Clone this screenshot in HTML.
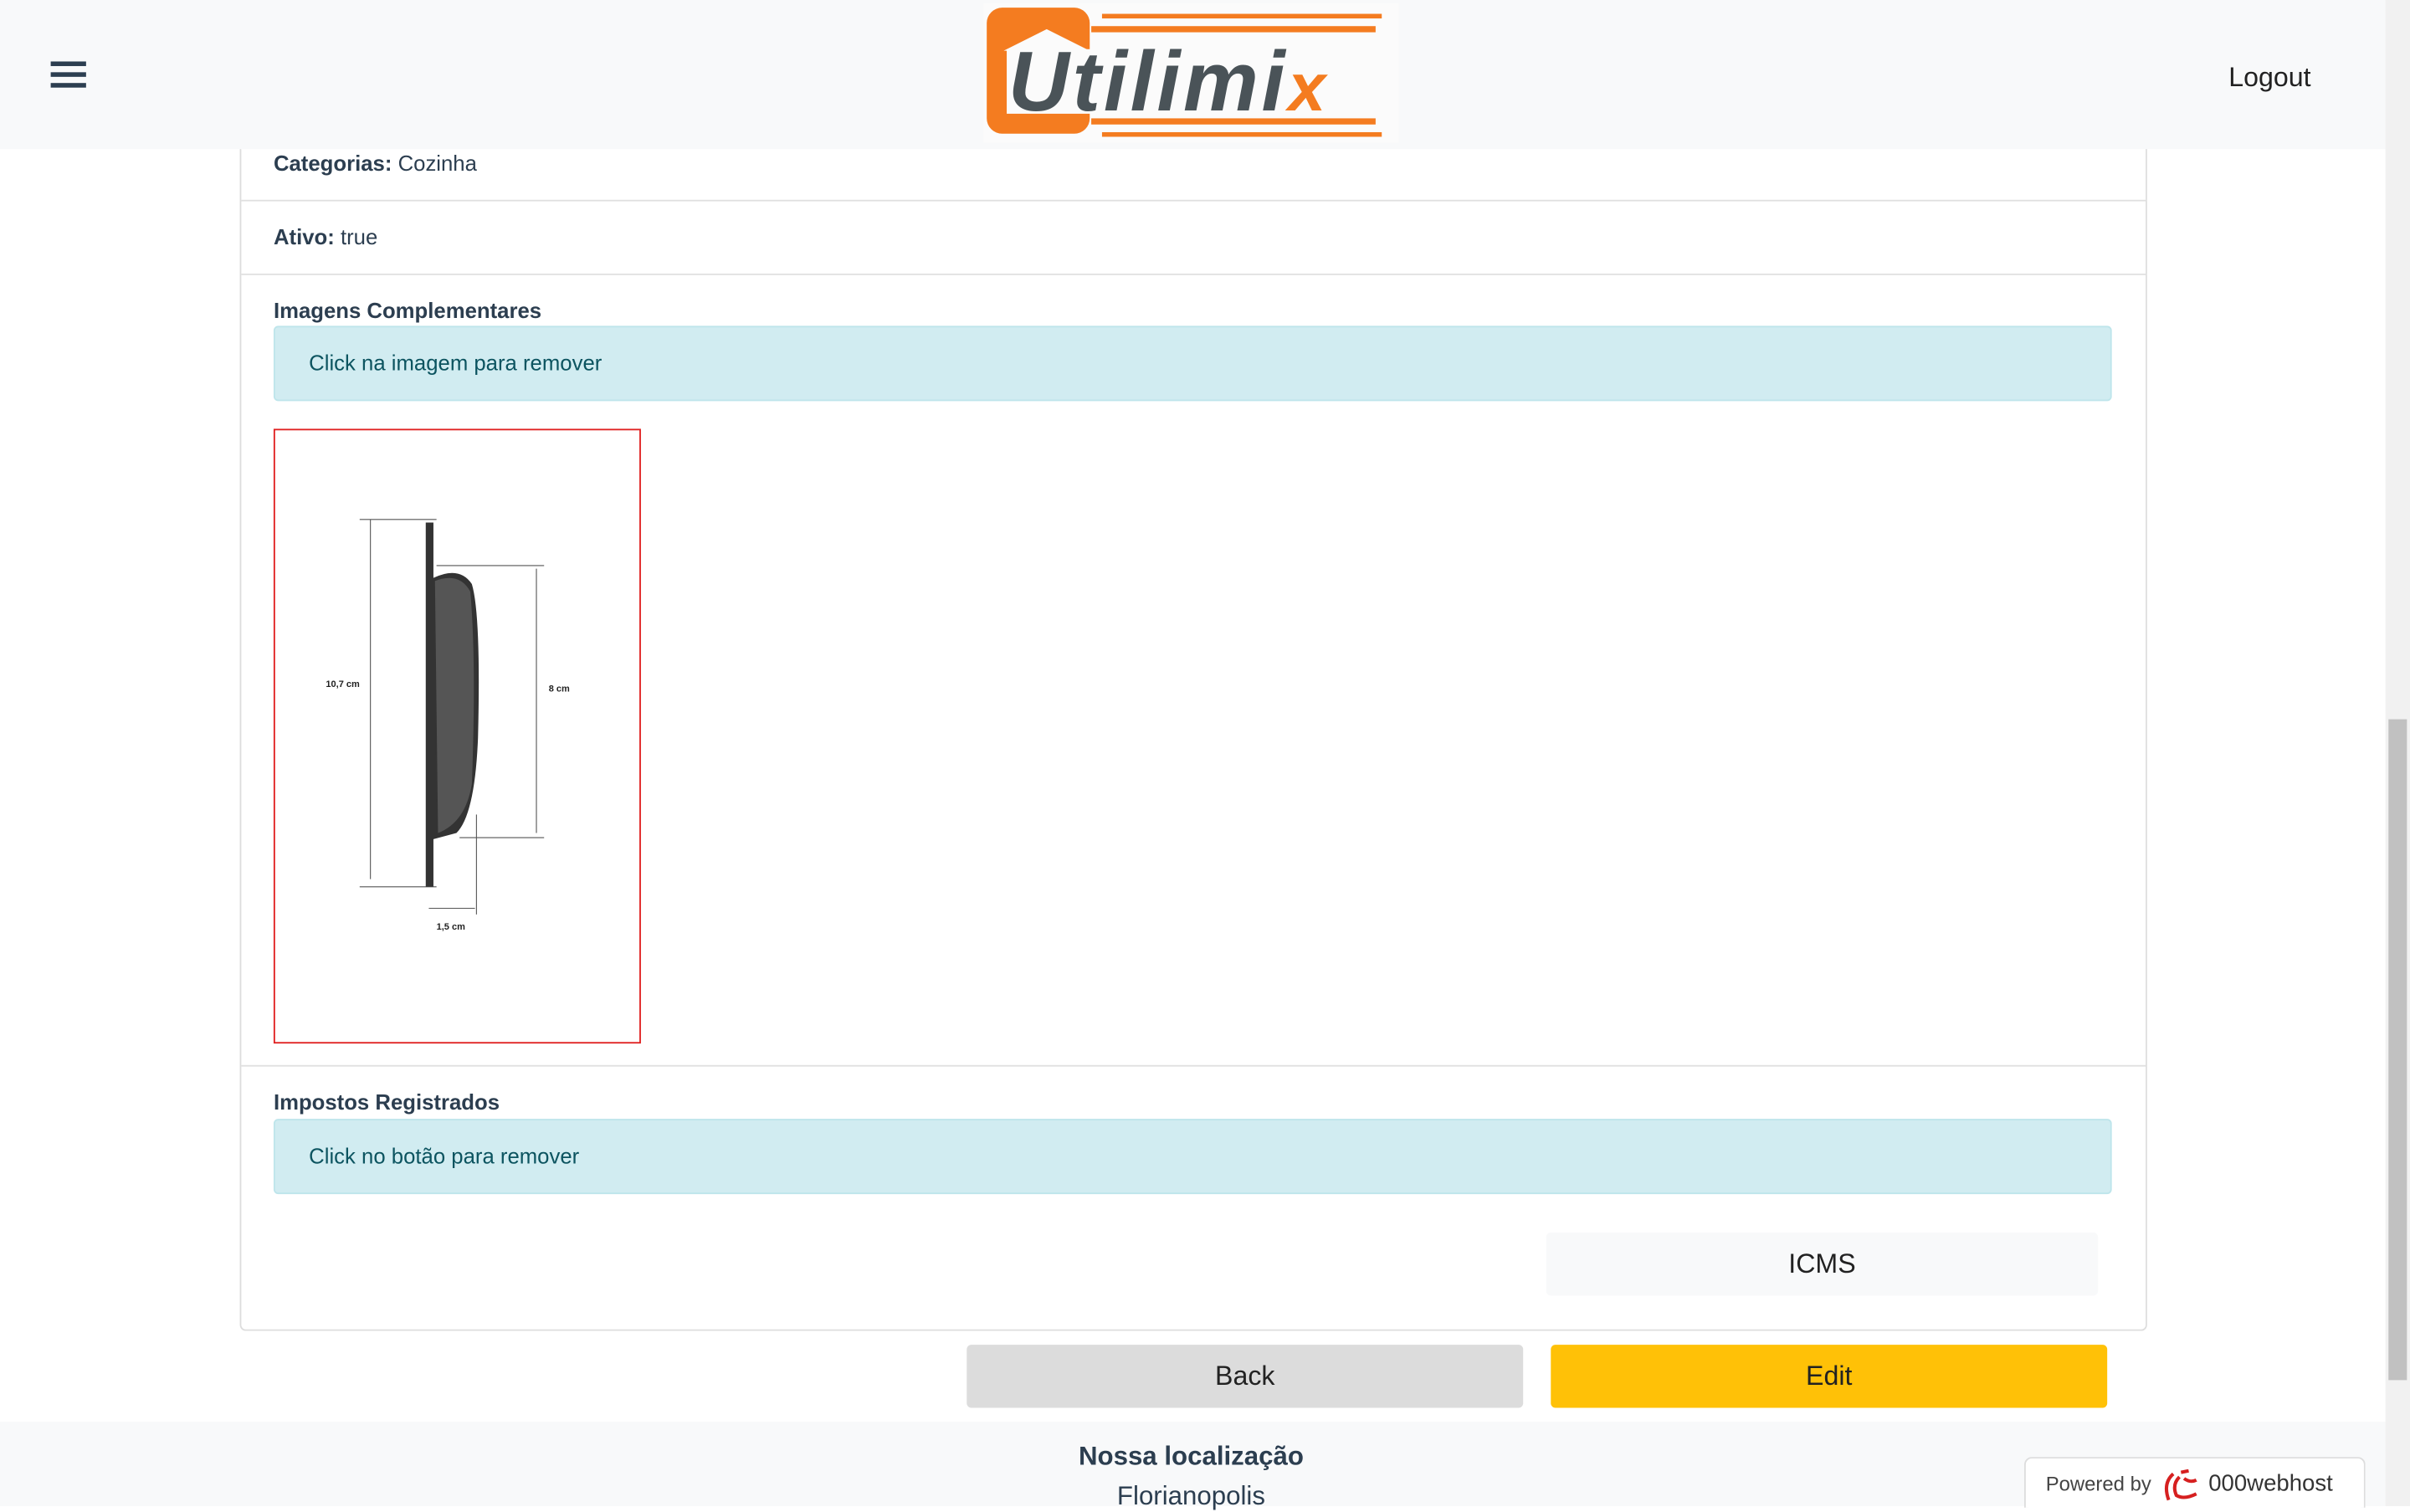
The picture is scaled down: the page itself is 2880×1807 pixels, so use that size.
<!DOCTYPE html>
<html><head><meta charset="utf-8"><style>
html,body{margin:0;padding:0;width:2880px;height:1800px;overflow:hidden;background:#fff}
#w{position:absolute;left:0;top:0;width:1568px;height:980px;transform:scale(1.836735);transform-origin:0 0;font-family:"Liberation Sans",Arial,sans-serif;color:#2c3e50;font-size:14px}
.a{position:absolute}
.hd{left:0;top:0;width:1552px;height:97px;background:#f8f9fa}
.card{left:156px;top:80px;width:1239px;height:785px;border:1px solid #ddd;border-top:none;border-radius:0 0 4px 4px}
.sep{left:157px;width:1239px;height:1px;background:#e0e0e0}
.al{left:178px;width:1194px;height:47px;background:#d1ecf1;border:1px solid #bee5eb;border-radius:3px;color:#0c5460;line-height:47px;text-indent:22px}
.btn{height:41px;line-height:41px;text-align:center;font-size:17.5px;color:#222;border-radius:3px}
.ol{position:absolute;background:#f47c20}
</style></head><body><div id="w">
<div class="a card"></div>
<div class="a" style="left:178px;top:98px"><b>Categorias:</b> Cozinha</div>
<div class="a sep" style="top:130px"></div>
<div class="a" style="left:178px;top:146px"><b>Ativo:</b> true</div>
<div class="a sep" style="top:178px"></div>
<div class="a" style="left:178px;top:194px"><b>Imagens Complementares</b></div>
<div class="a al" style="top:212px">Click na imagem para remover</div>
<div class="a" style="left:178px;top:279px;width:237px;height:398px;border:1px solid #e02020">
<svg width="237" height="398" viewBox="0 0 237 398">
<g stroke="#555" stroke-width=".6" fill="none">
<line x1="62" y1="58" x2="62" y2="292"/><line x1="55" y1="58" x2="105" y2="58"/><line x1="55" y1="297" x2="105" y2="297"/>
<line x1="170" y1="90" x2="170" y2="262"/><line x1="105" y1="88" x2="175" y2="88"/><line x1="120" y1="265" x2="175" y2="265"/>
<line x1="100" y1="311" x2="130" y2="311"/><line x1="131" y1="250" x2="131" y2="315"/>
</g>
<path d="M98 60 L103 60 L103 96 Q120 88 128 100 Q134 120 132 200 Q130 250 118 262 L103 266 L103 297 L98 297 Z" fill="#333"/>
<path d="M104 98 Q120 92 127 105 Q131 150 128 230 Q124 255 106 262 Z" fill="#555"/>
<text x="33" y="167" font-size="6" font-weight="bold" fill="#222" font-family="Liberation Sans">10,7 cm</text>
<text x="178" y="170" font-size="6" font-weight="bold" fill="#222" font-family="Liberation Sans">8 cm</text>
<text x="105" y="325" font-size="6" font-weight="bold" fill="#222" font-family="Liberation Sans">1,5 cm</text>
</svg></div>
<div class="a sep" style="top:693px"></div>
<div class="a" style="left:178px;top:709px"><b>Impostos Registrados</b></div>
<div class="a al" style="top:728px">Click no botão para remover</div>
<div class="a btn" style="left:1006px;top:802px;width:359px;background:#f8f9fa">ICMS</div>
<div class="a btn" style="left:629px;top:875px;width:362px;background:#dcdcdc">Back</div>
<div class="a btn" style="left:1009px;top:875px;width:362px;background:#ffc107">Edit</div>
<div class="a" style="left:0;top:925px;width:1552px;height:55px;background:#f8f9fa;text-align:center">
<div style="font-weight:bold;font-size:17px;margin-top:13px;margin-left:-2px">Nossa localização</div>
<div style="font-size:17px;margin-top:6px;margin-left:-2px">Florianopolis</div></div>
<div class="a" style="left:1317px;top:948px;width:220px;height:32px;background:#fff;border:1px solid #ddd;border-bottom:none;border-radius:5px 5px 0 0;font-size:13px;color:#444;line-height:34px">
<span style="margin-left:13px">Powered by</span>
<svg width="26" height="22" viewBox="0 0 26 22" style="vertical-align:middle;margin:0 2px"><path d="M9 3 Q2 9 6 20 M13 5 Q8 10 11 17 Q16 20 24 16 M14 2 L19 1 M16 6 Q20 9 24 7" stroke="#d62020" stroke-width="2.2" fill="none"/></svg>
<span style="font-size:15px;color:#333">000webhost</span></div>
<div class="a hd"></div>
<div class="a" style="left:33px;top:40px;width:23px;height:3px;background:#2c3e50;box-shadow:0 7px 0 #2c3e50,0 14px 0 #2c3e50"></div>
<div class="a" style="left:640px;top:2px;width:270px;height:91px;background:#fbfbfb;overflow:hidden">
<div class="a" style="left:2px;top:3px;width:67px;height:82px;background:#f47c20;border-radius:10px"></div>
<div class="a" style="left:15px;top:30px;width:56px;height:42px;background:#fbfbfb"></div>
<div class="a" style="left:13px;top:17px;width:0;height:0;border-left:28px solid transparent;border-right:28px solid transparent;border-bottom:14px solid #fbfbfb"></div>
<div class="ol" style="left:77px;top:7px;width:182px;height:3px"></div>
<div class="ol" style="left:70px;top:15px;width:185px;height:4px"></div>
<div class="ol" style="left:70px;top:75px;width:185px;height:4px"></div>
<div class="ol" style="left:77px;top:84px;width:182px;height:3px"></div>
<div class="a" style="left:16px;top:24px;font:italic bold 55px/1 'Liberation Sans',sans-serif;color:#4a5358;letter-spacing:2px;white-space:nowrap">Utilimi<span style="color:#f47c20;font-size:44px">x</span></div>
</div>
<div class="a" style="left:1450px;top:40px;font-size:17.5px;color:#222">Logout</div>
<div class="a" style="left:1552px;top:0;width:16px;height:980px;background:#f1f1f1"></div>
<div class="a" style="left:1554px;top:468px;width:12px;height:430px;background:#c1c1c1"></div>
</div></body></html>
